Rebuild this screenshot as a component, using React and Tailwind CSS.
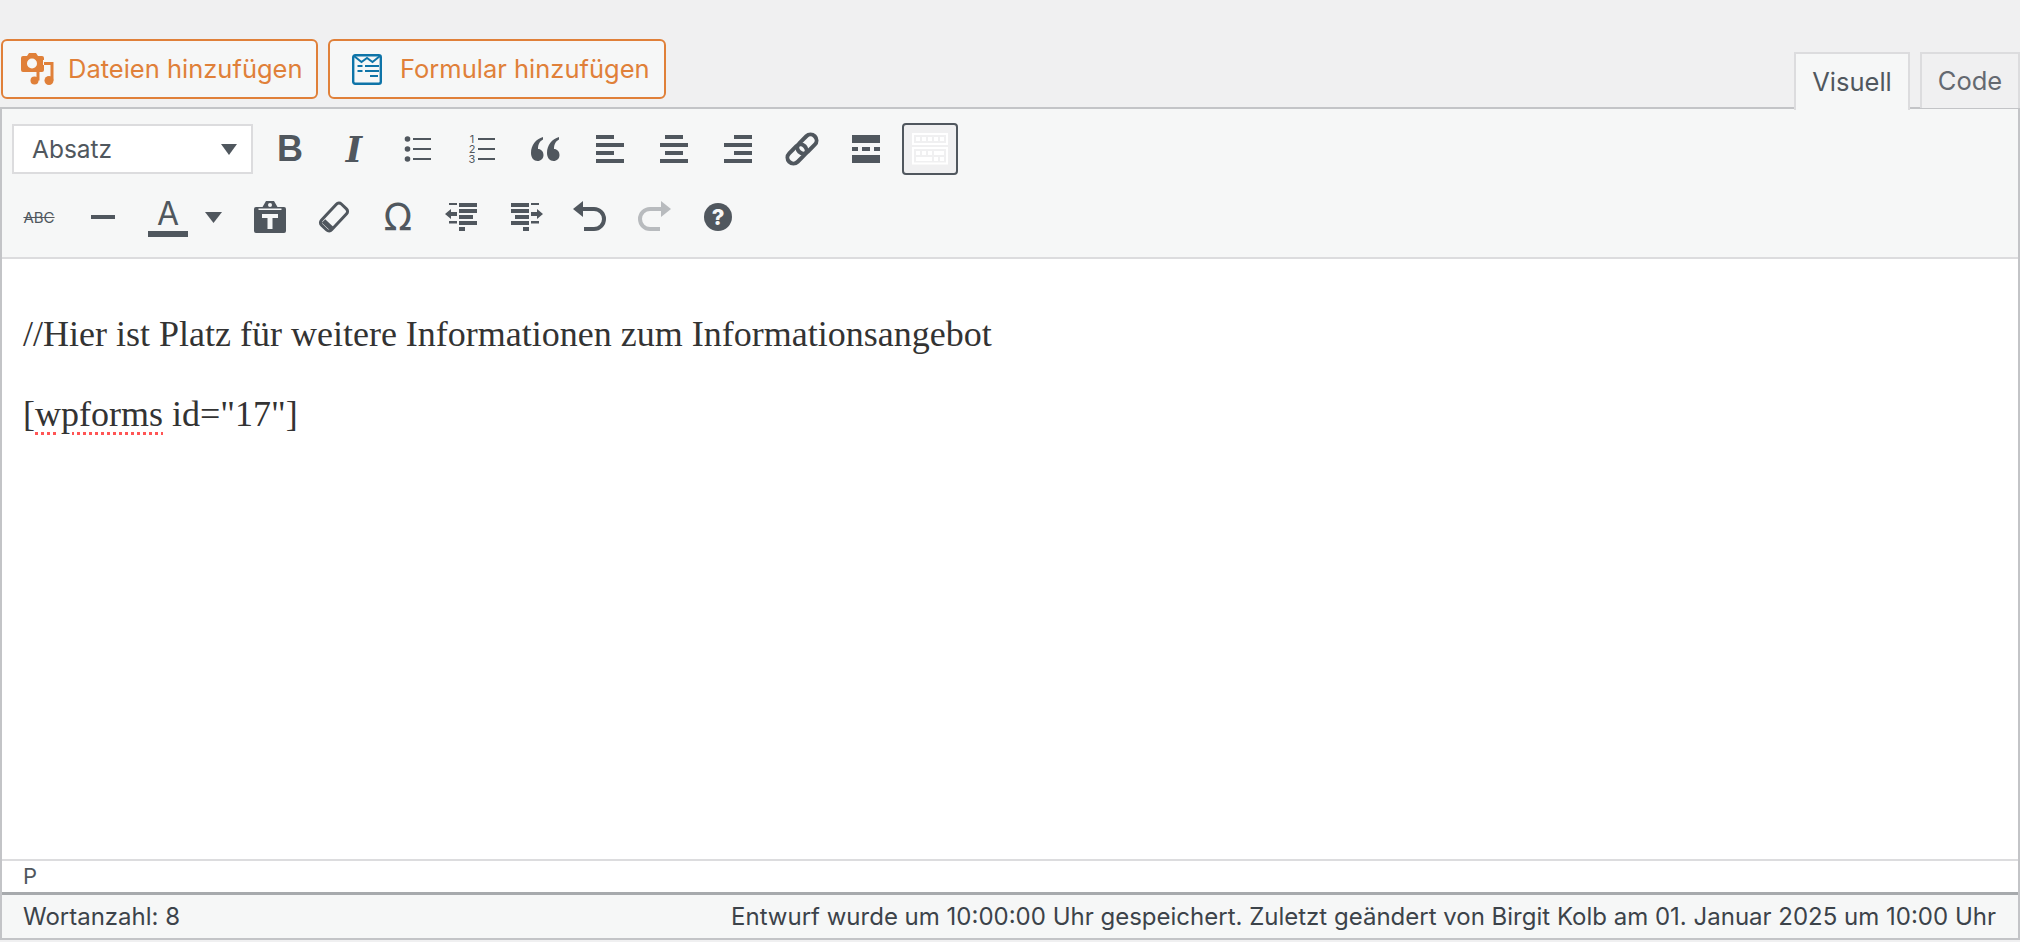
import React from 'react';

const ICON = '#50575e';

const Svg = ({ w = 32, h = 32, className = '', children }) => (
  <svg width={w} height={h} viewBox={`0 0 ${w} ${h}`} className={className} fill={ICON}>
    {children}
  </svg>
);

const Btn = ({ children, className = 'w-16' }) => (
  <div className={`${className} h-[52px] flex items-center justify-center shrink-0`}>{children}</div>
);

const FilesIcon = () => (
  <svg width="36" height="32" viewBox="0 0 36 32" className="shrink-0">
    <path d="M3 3h4l2-3h7l2 3h4a2 2 0 0 1 2 2v12a2 2 0 0 1-2 2H3a2 2 0 0 1-2-2V5a2 2 0 0 1 2-2z" fill="#e08039" />
    <circle cx="12" cy="10.5" r="5" fill="#f6f7f7" />
    <circle cx="14.5" cy="27.5" r="6.5" fill="#f6f7f7" />
    <path d="M23 7h13v21h-3V12H23z" fill="#f6f7f7" />
    <circle cx="14.5" cy="27.5" r="4" fill="#e08039" />
    <circle cx="29" cy="27.5" r="4.5" fill="#e08039" />
    <path d="M16.5 27.5V18h3v9.5zM30.5 27.5V12H24V9h9.5v18.5z" fill="#e08039" />
  </svg>
);

const FormIcon = () => (
  <svg width="30" height="31" viewBox="0 0 30 31" className="shrink-0" fill="none">
    <rect x="1.2" y="1.2" width="27.6" height="28.6" rx="2" stroke="#0e74a8" strokeWidth="2.4" />
    <path d="M2 2l7.5 6 5.5-4 5.5 4L28 2" stroke="#0e74a8" strokeWidth="2" />
    <path d="M5.5 11h5v2h-5zM13 11h14v2H13zM5.5 16h5v2h-5zM13 16h14v2H13zM18 21h8v2h-8z" fill="#0e74a8" />
  </svg>
);

const Caret = ({ w, h }) => (
  <svg width={w} height={h} viewBox={`0 0 ${w} ${h}`} fill={ICON}>
    <path d={`M0 0H${w}L${w / 2} ${h}z`} />
  </svg>
);

const UlIcon = () => (
  <Svg>
    <circle cx="5.5" cy="6" r="2.8" />
    <circle cx="5.5" cy="16" r="2.8" />
    <circle cx="5.5" cy="26" r="2.8" />
    <path d="M11 5h18v2H11zM11 15h18v2H11zM11 25h18v2H11z" />
  </Svg>
);

const OlIcon = () => (
  <Svg>
    <text x="6" y="10" fontSize="11" textAnchor="middle" fontFamily="Inter, sans-serif">1</text>
    <text x="6" y="20" fontSize="11" textAnchor="middle" fontFamily="Inter, sans-serif">2</text>
    <text x="6" y="30" fontSize="11" textAnchor="middle" fontFamily="Inter, sans-serif">3</text>
    <path d="M12 5h17v2H12zM12 15h17v2H12zM12 25h17v2H12z" />
  </Svg>
);

const QuoteIcon = () => (
  <Svg>
    <path d="M13 4C6 6 1 12 1 20c0 5 3 8 6.500 8s6-2.500 6-6-2.500-6-5.500-6c0-5 2-8 5-9.500z" />
    <path d="M29 4c-7 2-12 8-12 16 0 5 3 8 6.500 8s6-2.500 6-6-2.500-6-5.500-6c0-5 2-8 5-9.500z" />
  </Svg>
);

const AlignIcon = ({ d }) => (
  <Svg>
    <path d={d} />
  </Svg>
);

const LinkIcon = () => (
  <svg width="36" height="36" viewBox="0 0 36 36" fill="none" stroke={ICON} strokeWidth="4">
    <rect x="12" y="7" width="22" height="12" rx="6" transform="rotate(-45 23 13)" />
    <rect x="2" y="17" width="22" height="12" rx="6" transform="rotate(-45 13 23)" />
  </svg>
);

const MoreIcon = () => (
  <Svg>
    <path d="M2 2h28v8H2zM2 14h6v4H2zM12 14h8v4h-8zM24 14h6v4h-6zM2 22h28v8H2z" />
  </Svg>
);

const KeyboardIcon = () => (
  <svg width="36" height="32" viewBox="0 0 36 32" fill="#fff">
    <path fillRule="evenodd" d="M0 0h36v12H0zM2 2v8h32V2zM0 14h36v17.500H0zM2 16v13.500h32V16z" />
    <path d="M4 4h4v4H4zM10 4h4v4h-4zM16 4h4v4h-4zM22 4h4v4h-4zM28 4h4v4h-4zM4 18h4v4H4zM10 18h4v4h-4zM16 18h4v4h-4zM22 18h10v4H22zM4 24h16v4H4zM22 24h4v4h-4zM28 24h4v4h-4z" />
  </svg>
);

const ClipboardIcon = () => (
  <Svg>
    <path d="M2 6h6.500L12 0h8l3.500 6H30a2 2 0 0 1 2 2v22a2 2 0 0 1-2 2H2a2 2 0 0 1-2-2V8a2 2 0 0 1 2-2z" />
    <circle cx="16" cy="4" r="2" fill="#f6f7f7" />
    <path d="M4.500 7.500h23v1.500h-23zM8 13h16v4h-5.500v11h-5V17H8z" fill="#f6f7f7" />
  </Svg>
);

const EraserIcon = () => (
  <svg width="32" height="32" viewBox="0 0 32 32" fill="none" stroke={ICON} strokeWidth="3">
    <rect x="1.500" y="9" width="29" height="14" rx="3.500" transform="rotate(-47 16 16)" />
    <path d="M5.500 20l8 7.500" strokeWidth="5" />
  </svg>
);

const OutdentIcon = ({ className = '' }) => (
  <Svg className={className}>
    <path d="M4 2h8v2H4zM14 2h18v4H14zM14 8h18v4H14zM14 14h14v4H14zM14 20h18v4H14zM4 20h8v2.500H4zM14 26h6v4h-6zM0 13l6-5v3h6v4H6v3z" />
  </Svg>
);

const UndoIcon = ({ color = ICON, className = '' }) => (
  <svg width="36" height="32" viewBox="0 0 36 32" className={className}>
    <path d="M1 8l10-8v16z" fill={color} />
    <path d="M10 8h12a10 10 0 0 1 0 20H12" fill="none" stroke={color} strokeWidth="4" />
  </svg>
);

const HelpIcon = () => (
  <div className="w-7 h-7 rounded-full bg-[#50575e] flex items-center justify-center text-[#f6f7f7] text-[22px] font-extrabold leading-none">
    ?
  </div>
);

const App = () => {
  return (
    <div className="w-[2020px] h-[942px] overflow-hidden bg-[#f0f0f1] [font-family:Inter,sans-serif] text-[#50575e]">
      <div className="h-[107px] pl-px flex justify-between items-start">
        <div className="flex gap-[10px] pt-[39px]">
          <button className="w-[317px] h-[60px] pl-[17px] flex items-center gap-[12px] border-2 border-[#e08039] rounded-md bg-[#f6f7f7] text-[#e08039] text-[25.500px]">
            <FilesIcon />
            Dateien hinzufügen
          </button>
          <button className="w-[338px] h-[60px] pl-[22px] flex items-center gap-[18px] border-2 border-[#e08039] rounded-md bg-[#f6f7f7] text-[#e08039] text-[25.500px]">
            <FormIcon />
            Formular hinzufügen
          </button>
        </div>
        <div className="flex gap-[10px] pt-[52px] relative z-10">
          <div className="w-[116px] h-[58px] flex items-center justify-center border-2 border-b-0 border-[#dcdcde] bg-[#f6f7f7] text-[25.500px]">
            Visuell
          </div>
          <div className="w-[100px] h-[56px] flex items-center justify-center border-2 border-b-0 border-[#dcdcde] bg-[#f0f0f1] text-[#646970] text-[25.500px]">
            Code
          </div>
        </div>
      </div>

      <div className="border-2 border-[#c3c4c7] bg-white h-[833px] flex flex-col">
        <div className="h-[148px] shrink-0 bg-[#f6f7f7] pt-[14px] flex flex-col gap-4">
          <div className="flex items-center">
            <div className="ml-[10px] w-[241px] h-[50px] px-[18px] flex items-center justify-between border-2 border-[#dcdcde] bg-white text-[24.500px]">
              Absatz
              <span className="mr-[-4px]"><Caret w={16} h={11} /></span>
            </div>
            <div className="ml-[5px] flex items-center">
              <Btn><span className="text-[36px] leading-none font-bold [font-family:'Liberation_Sans',sans-serif]">B</span></Btn>
              <Btn><span className="text-[35px] leading-none font-bold italic [font-family:'DejaVu_Serif',serif]">I</span></Btn>
              <Btn><UlIcon /></Btn>
              <Btn><OlIcon /></Btn>
              <Btn><QuoteIcon /></Btn>
              <Btn><AlignIcon d="M2 2h18v4H2zM2 10h28v4H2zM2 18h18v4H2zM2 26h28v4H2z" /></Btn>
              <Btn><AlignIcon d="M7 2h18v4H7zM2 10h28v4H2zM7 18h18v4H7zM2 26h28v4H2z" /></Btn>
              <Btn><AlignIcon d="M12 2h18v4H12zM2 10h28v4H2zM12 18h18v4H12zM2 26h28v4H2z" /></Btn>
              <Btn><LinkIcon /></Btn>
              <Btn><MoreIcon /></Btn>
              <div className="ml-1 w-14 h-[52px] flex items-center justify-center border-2 border-[#50575e] rounded bg-[#f0f0f1]">
                <KeyboardIcon />
              </div>
            </div>
          </div>

          <div className="ml-[5px] flex items-center">
            <Btn><span className="text-[15px] leading-none line-through">ABC</span></Btn>
            <Btn><div className="w-6 h-1 bg-[#50575e]" /></Btn>
            <Btn className="w-[66px]">
              <div className="flex flex-col items-center">
                <span className="text-[32px] leading-[32px]">A</span>
                <div className="w-10 h-[6px] bg-[#50575e] mt-px" />
              </div>
            </Btn>
            <Btn className="w-[37px]"><span className="mr-[12px]"><Caret w={17} h={11} /></span></Btn>
            <Btn><ClipboardIcon /></Btn>
            <Btn><EraserIcon /></Btn>
            <Btn><span className="text-[37px] leading-none font-medium [font-family:'DejaVu_Sans',sans-serif]">Ω</span></Btn>
            <Btn><span className="mr-[3px]"><OutdentIcon /></span></Btn>
            <Btn><span className="ml-[2px]"><OutdentIcon className="-scale-x-100" /></span></Btn>
            <Btn><UndoIcon /></Btn>
            <Btn><UndoIcon color="#b8bbbe" className="-scale-x-100" /></Btn>
            <Btn><HelpIcon /></Btn>
          </div>
        </div>

        <div className="flex-1 border-t-2 border-[#dcdcde] pl-[21px] pt-[35px] [font-family:'Liberation_Serif',serif] text-[#333] text-[36px] leading-[80px]">
          <p>//Hier ist Platz für weitere Informationen zum Informationsangebot</p>
          <p>
            [<span className="underline decoration-dotted decoration-[#f55] decoration-[3px] underline-offset-[6px]">wpforms</span> id="17"]
          </p>
        </div>

        <div className="h-[33px] shrink-0 border-t-2 border-[#dcdcde] pl-[21px] flex items-center text-[22px] text-[#50575e]">
          P
        </div>
        <div className="h-[46px] shrink-0 border-t-[3px] border-[#a7aaad] bg-[#f6f7f7] pl-[21px] pr-[22px] flex items-center justify-between text-[24px] text-[#3c434a]">
          <span>Wortanzahl: 8</span>
          <span>Entwurf wurde um 10:00:00 Uhr gespeichert. Zuletzt geändert von Birgit Kolb am 01. Januar 2025 um 10:00 Uhr</span>
        </div>
      </div>
    </div>
  );
};

export default App;
